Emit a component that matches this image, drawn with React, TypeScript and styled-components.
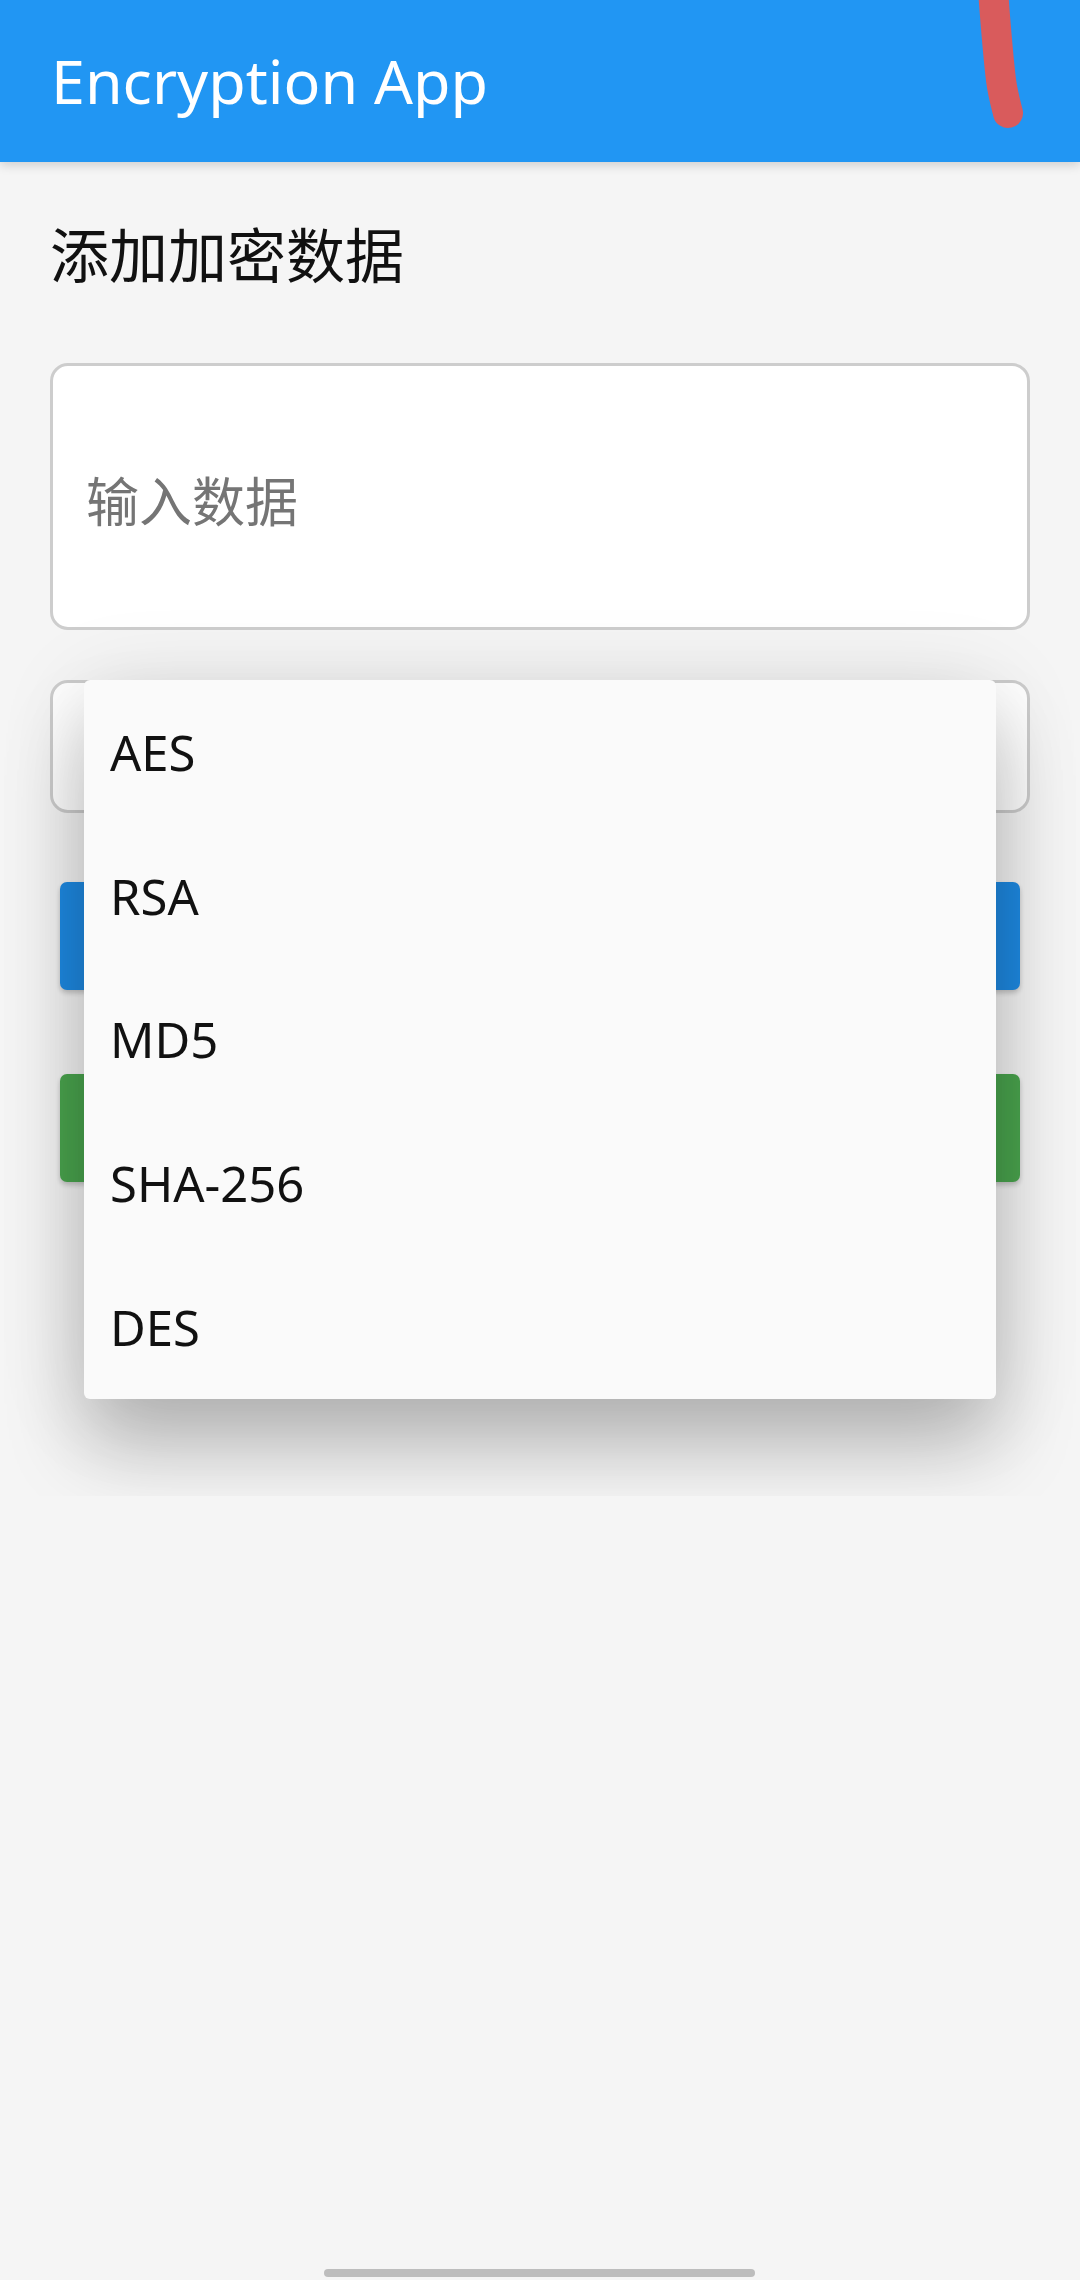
import React from "react";
import styled, { createGlobalStyle } from "styled-components";

const Global = createGlobalStyle`
  html, body { margin: 0; padding: 0; }
  body {
    background: #f5f5f5;
    font-family: "Noto Sans", "Noto Sans CJK SC", sans-serif;
  }
`;

const Screen = styled.div`
  position: relative;
  width: 1080px;
  height: 2280px;
  overflow: hidden;
  background: #f5f5f5;
`;

const AppBar = styled.header`
  position: relative;
  z-index: 2;
  height: 162px;
  background: #2196f3;
  display: flex;
  align-items: center;
  padding-left: 51px;
  box-shadow: 0 3px 10px rgba(0, 0, 0, 0.16);
`;

const Title = styled.h1`
  margin: 0;
  color: #ffffff;
  font-family: "Noto Sans", "Noto Sans CJK SC", sans-serif;
  font-weight: 400;
  font-size: 61px;
  line-height: 1;
  padding-bottom: 2px;
`;

const Scribble = styled.svg`
  position: absolute;
  right: 0;
  top: 0;
  width: 120px;
  height: 140px;
`;

const Content = styled.main`
  padding: 51px 50px 0;
  display: flex;
  flex-direction: column;
`;

const Heading = styled.h2`
  margin: 0;
  font-family: "Noto Sans CJK SC", sans-serif;
  font-weight: 400;
  font-size: 59px;
  line-height: 80px;
  color: #111111;
`;

const Field = styled.div<{ $height: number; $top: number }>`
  box-sizing: border-box;
  height: ${(p) => p.$height}px;
  margin-top: ${(p) => p.$top}px;
  border: 3px solid #cdcdcd;
  border-radius: 18px;
  background: #ffffff;
  display: flex;
  align-items: center;
  padding-left: 33px;
`;

const Placeholder = styled.span`
  font-family: "Noto Sans CJK SC", sans-serif;
  font-size: 53px;
  color: #757575;
  padding-top: 4px;
`;

const Button = styled.div<{ $color: string; $top: number }>`
  height: 108px;
  margin: ${(p) => p.$top}px 10px 0;
  background: ${(p) => p.$color};
  border-radius: 7px;
  box-shadow: 0 3px 5px rgba(0, 0, 0, 0.2);
`;

const PopupWindow = styled.div`
  position: absolute;
  z-index: 3;
  left: 0;
  top: 560px;
  width: 1080px;
  height: 936px;
  overflow: hidden;
  padding: 120px 0 0 84px;
  box-sizing: border-box;
  pointer-events: none;
`;

const Menu = styled.ul`
  margin: 0;
  padding: 0;
  list-style: none;
  width: 912px;
  height: 719px;
  background: #fafafa;
  border-radius: 6px;
  display: flex;
  flex-direction: column;
  box-shadow: 0 50px 80px rgba(0, 0, 0, 0.22), 0 10px 90px rgba(0, 0, 0, 0.12);
`;

const MenuItem = styled.li`
  flex: 1;
  display: flex;
  align-items: center;
  padding-left: 26px;
  font-family: "Noto Sans", "Noto Sans CJK SC", sans-serif;
  font-size: 49px;
  color: #111111;
`;

const HomeBar = styled.div`
  position: absolute;
  left: 324px;
  bottom: 3px;
  width: 431px;
  height: 8px;
  border-radius: 4px;
  background: #bdbdbd;
`;

const options = ["AES", "RSA", "MD5", "SHA-256", "DES"];

export default function App() {
  return (
    <Screen>
      <Global />
      <AppBar>
        <Title>Encryption App</Title>
        <Scribble viewBox="0 0 120 140">
          <path
            d="M33 -10 C36 30 38 55 41 80 C43 95 46 105 48 113"
            stroke="#d95b5c"
            strokeWidth="30"
            strokeLinecap="round"
            fill="none"
          />
        </Scribble>
      </AppBar>
      <Content>
        <Heading>添加加密数据</Heading>
        <Field $height={267} $top={70}>
          <Placeholder>输入数据</Placeholder>
        </Field>
        <Field $height={133} $top={50} />
        <Button $color="#1e8ae3" $top={69} />
        <Button $color="#4aa54e" $top={84} />
      </Content>
      <PopupWindow>
        <Menu>
          {options.map((o) => (
            <MenuItem key={o}>{o}</MenuItem>
          ))}
        </Menu>
      </PopupWindow>
      <HomeBar />
    </Screen>
  );
}
